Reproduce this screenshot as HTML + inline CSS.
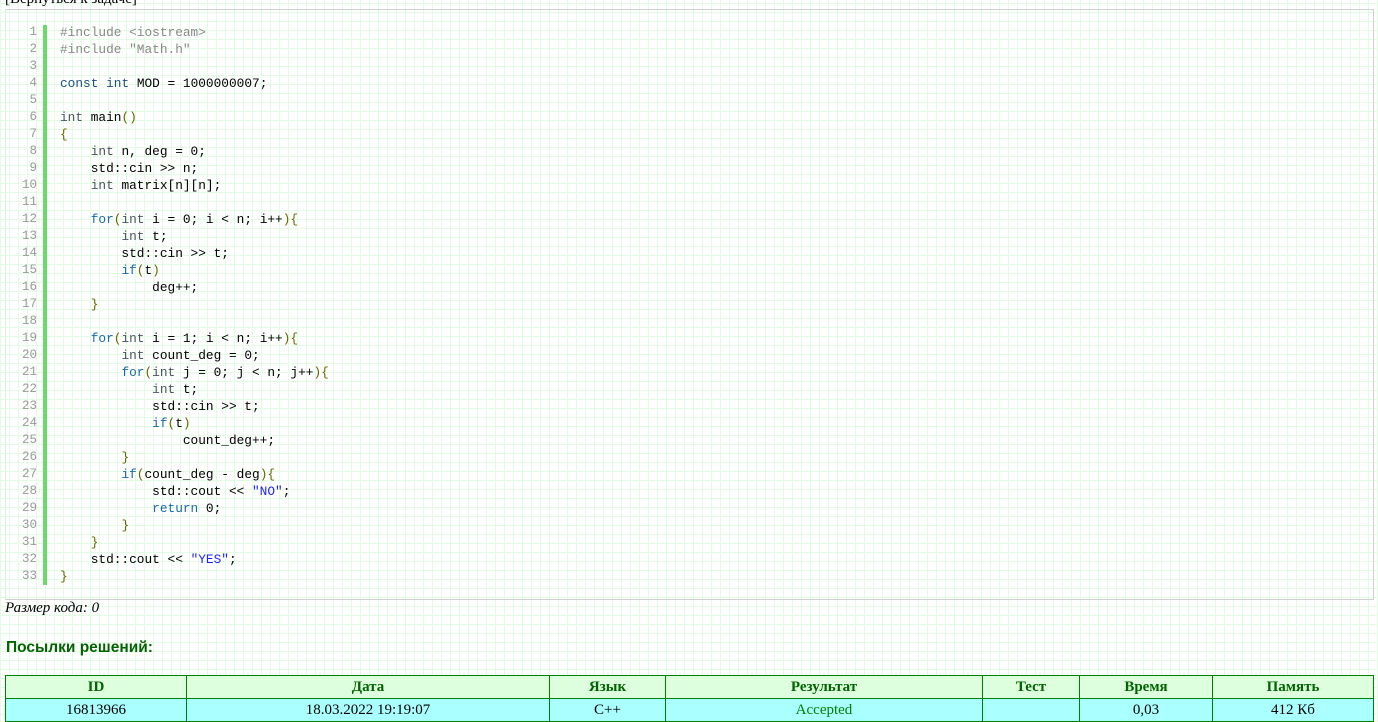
<!DOCTYPE html>
<html><head><meta charset="utf-8"><style>
html,body{margin:0;padding:0;}
body{width:1378px;height:722px;overflow:hidden;position:relative;background-color:#fff;
background-image:linear-gradient(to right,#e3fbe3 1px,transparent 1px),linear-gradient(to bottom,#e3fbe3 1px,transparent 1px);
background-size:9px 9px;background-position:0px 3px;font-family:"Liberation Serif",serif;}
.back{position:absolute;left:5px;top:-9px;font-size:15px;color:#000;}
.code{position:absolute;left:5px;top:9px;width:1367px;height:589px;border:1px solid #d0d0d0;border-left-color:#e8e8e8;}
.ln{position:absolute;left:0;top:14px;width:31px;text-align:right;font-family:"Liberation Mono",monospace;font-size:12.5px;line-height:17px;color:#999;}
.bar{position:absolute;left:37px;top:15px;width:4px;height:560px;background:#66dd66;}
pre{position:absolute;left:54px;top:14px;margin:0;font-family:"Liberation Mono",monospace;font-size:12.8px;line-height:17px;color:#000;}
.k{color:#1a6aa8;}.t{color:#4a5560;}.p{color:#888;}.s{color:#2222ff;}.b{color:#666600;}.c{color:#1f4f7f;}
.size{position:absolute;left:5px;top:600px;font-style:italic;font-size:15px;}
h3{position:absolute;left:6px;top:639px;margin:0;font-family:"Liberation Sans",sans-serif;font-size:15.5px;font-weight:bold;color:#006400;}
table{position:absolute;left:5px;top:675px;width:1369px;border-collapse:collapse;font-size:15px;table-layout:fixed;}
td,th{border:1px solid #008000;text-align:center;height:22px;padding:0;}
th{background:#ddffdd;color:#006400;font-weight:bold;}
td{background:#aaffff;color:#000;}
</style></head><body>
<div class="back">[Вернуться к задаче]</div>
<div class="code">
<div class="ln">1<br>2<br>3<br>4<br>5<br>6<br>7<br>8<br>9<br>10<br>11<br>12<br>13<br>14<br>15<br>16<br>17<br>18<br>19<br>20<br>21<br>22<br>23<br>24<br>25<br>26<br>27<br>28<br>29<br>30<br>31<br>32<br>33</div>
<div class="bar"></div>
<pre><span class="p">#include &lt;iostream&gt;</span>
<span class="p">#include "Math.h"</span>

<span class="c">const</span> <span class="c">int</span> MOD = 1000000007;

<span class="t">int</span> main<span class="b">()</span>
<span class="b">{</span>
    <span class="t">int</span> n, deg = 0;
    std::cin &gt;&gt; n;
    <span class="t">int</span> matrix[n][n];

    <span class="k">for</span><span class="b">(</span><span class="t">int</span> i = 0; i &lt; n; i++<span class="b">){</span>
        <span class="t">int</span> t;
        std::cin &gt;&gt; t;
        <span class="k">if</span><span class="b">(</span>t<span class="b">)</span>
            deg++;
    <span class="b">}</span>

    <span class="k">for</span><span class="b">(</span><span class="t">int</span> i = 1; i &lt; n; i++<span class="b">){</span>
        <span class="t">int</span> count_deg = 0;
        <span class="k">for</span><span class="b">(</span><span class="t">int</span> j = 0; j &lt; n; j++<span class="b">){</span>
            <span class="t">int</span> t;
            std::cin &gt;&gt; t;
            <span class="k">if</span><span class="b">(</span>t<span class="b">)</span>
                count_deg++;
        <span class="b">}</span>
        <span class="k">if</span><span class="b">(</span>count_deg - deg<span class="b">){</span>
            std::cout &lt;&lt; <span class="s">"NO"</span>;
            <span class="k">return</span> 0;
        <span class="b">}</span>
    <span class="b">}</span>
    std::cout &lt;&lt; <span class="s">"YES"</span>;
<span class="b">}</span></pre>
</div>
<div class="size">Размер кода: 0</div>
<h3>Посылки решений:</h3>
<table>
<colgroup><col style="width:181px"><col style="width:363px"><col style="width:116px"><col style="width:317px"><col style="width:97px"><col style="width:133px"><col></colgroup>
<tr><th>ID</th><th>Дата</th><th>Язык</th><th>Результат</th><th>Тест</th><th>Время</th><th>Память</th></tr>
<tr><td>16813966</td><td>18.03.2022 19:19:07</td><td>C++</td><td style="color:#008000">Accepted</td><td></td><td>0,03</td><td>412 Кб</td></tr>
</table>
</body></html>
